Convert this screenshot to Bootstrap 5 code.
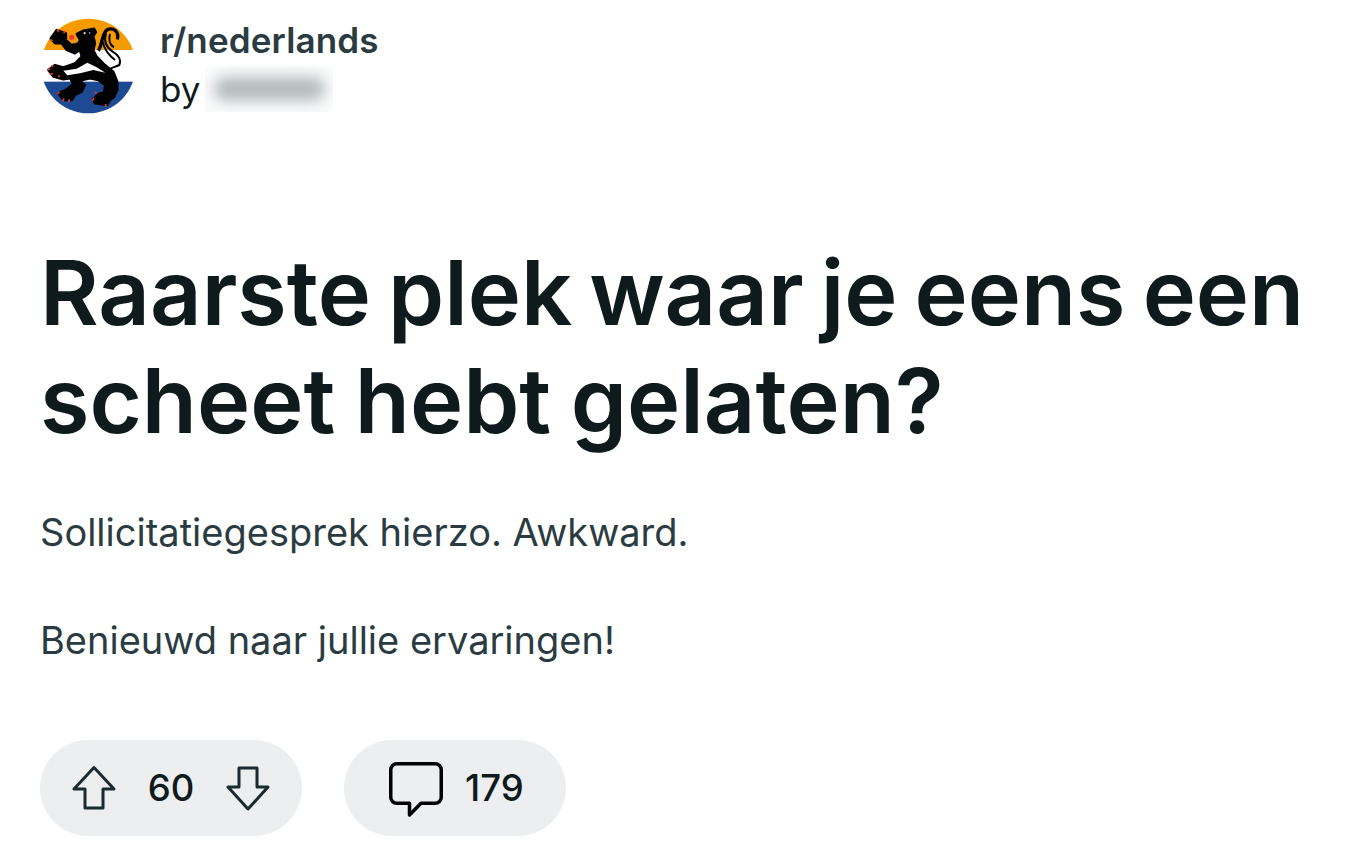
<!DOCTYPE html>
<html lang="nl"><head><meta charset="utf-8"><title>r/nederlands</title>
<link href="https://cdn.jsdelivr.net/npm/bootstrap@5.3.0/dist/css/bootstrap.min.css" rel="stylesheet">
<style>
body{font-family:Inter,"Liberation Sans",sans-serif;background:#fff;overflow:hidden}
.post-wrap{padding:18px 40px 0 40px}
.avatar-icon{width:96px;height:96px;margin-left:-1px;margin-right:25px;flex:none}
.sub-name{font-size:35px;line-height:46px;font-weight:600;color:#2a3c42;margin-top:-1px;letter-spacing:.15px}
.by-line{font-size:35px;line-height:46px;color:#0f1a1c;gap:5px;margin-top:3px}
.blur-box{width:128px;height:46px;background:#fafbfb;position:relative;overflow:hidden}
.blur-box::after{content:"";position:absolute;left:9px;right:8px;top:11px;height:24px;border-radius:12px;background:#b4bbbd;filter:blur(7px)}
.post-title{font-size:90px;line-height:108px;font-weight:600;color:#0f1a1c;word-spacing:-5.600px;margin:125px 0 0 0}
.title-tail{word-spacing:-3px}
.post-body{font-size:38px;line-height:54px;color:#2a3c42;margin:50px 0 0 0}
.action-row{gap:42px;margin-top:73px}
.pill-box{height:96px;border-radius:48px;background:#eceef0;font-size:36.500px;font-weight:500;color:#0f1a1c}
.vote-pill{width:262px;padding-left:30px;padding-right:30px}
.talk-pill{width:222px;padding-left:44px;gap:21px}
.vote-count{flex:1;text-align:center}
</style></head><body>
<div class="post-wrap">
 <div class="d-flex">
  <svg class="avatar-icon" viewBox="27 24 288 288"><defs><clipPath id="disc"><circle cx="175" cy="168" r="142"/></clipPath></defs>
   <g clip-path="url(#disc)"><rect x="27" y="24" width="288" height="288" fill="#fff"/><rect x="27" y="24" width="288" height="96" fill="#f59b00"/><rect x="27" y="215" width="288" height="97" fill="#1e4a94"/></g>
   <path fill="#000" stroke="#000" stroke-width="7" stroke-linejoin="round" d="M140 72L160 62 192 56 198 66 190 78 195 100 190 120 200 140 225 165 250 185 262 215 262 240 252 262 240 270 232 285 195 280 188 268 205 252 222 248 225 225 205 210 180 205 150 212 165 225 155 245 135 255 125 270 100 270 85 250 110 238 130 222 120 205 100 208 70 200 55 180 75 165 100 172 135 160 155 140 150 120 135 130 110 120 95 100 75 100 62 85 80 60 108 70 108 90 125 105 145 100 150 90Z"/>
   <path fill="#fff" d="M100 182L140 176 172 158 200 172 226 188 190 180 150 190 112 196Z"/>
   <path fill="none" stroke="#000" stroke-width="10" d="M205 122C215 110 215 75 230 60 250 50 268 65 262 88"/>
   <path fill="none" stroke="#000" stroke-width="6" d="M228 70C222 90 225 110 248 125 265 135 275 150 268 165 255 172 245 172 238 178M240 72C235 90 240 105 252 112M218 95C222 115 235 135 255 150"/>
   <circle cx="125" cy="82" r="8" fill="#e8402a"/><path stroke="#f08a5a" stroke-width="4" fill="none" d="M125 90L136 100"/>
   <path stroke="#e8402a" stroke-width="5" fill="none" d="M60 92L68 90M82 58L86 66M104 62L102 70M52 178L60 178M64 166L70 170M60 194L68 190M86 202L88 196M82 252L88 246M98 274L102 266M116 276L118 268M186 272L192 264M194 246L200 250M228 290L226 282"/>
   <path fill="#fff" d="M160 68l6-2 1 5-5 2zM176 68l5-1-1 5z"/>
  </svg>
  <div>
   <div class="sub-name">r/nederlands</div>
   <div class="by-line d-flex"><span>by</span><span class="blur-box"></span></div>
  </div>
 </div>
 <h1 class="post-title">Raarste plek waar je eens een<br><span class="title-tail">scheet hebt gelaten?</span></h1>
 <p class="post-body">Sollicitatiegesprek hierzo. Awkward.<br><br>Benieuwd naar jullie ervaringen!</p>
 <div class="action-row d-flex">
  <div class="pill-box vote-pill d-flex align-items-center">
   <svg width="48" height="48" viewBox="0 0 48 48" fill="none" stroke="#1a2a2e" stroke-width="3" stroke-linejoin="round"><path d="M24 3.500 L44 25 H33 V44 H15 V25 H4 Z"/></svg>
   <span class="vote-count">60</span>
   <svg width="48" height="48" viewBox="0 0 48 48" fill="none" stroke="#1a2a2e" stroke-width="3" stroke-linejoin="round"><path d="M24 45 L4 23 H15 V4 H33 V23 H44 Z"/></svg>
  </div>
  <div class="pill-box talk-pill d-flex align-items-center">
   <svg width="56" height="60" viewBox="0 0 56 60" fill="none" stroke="#000" stroke-width="3.500" stroke-linejoin="round"><path d="M8.750 5.750H47.250a6 6 0 0 1 6 6V39.250a6 6 0 0 1-6 6H33L21.500 57V45.250H8.750a6 6 0 0 1-6-6V11.750a6 6 0 0 1 6-6Z"/></svg>
   <span>179</span>
  </div>
 </div>
</div>
<script src="https://cdn.jsdelivr.net/npm/bootstrap@5.3.0/dist/js/bootstrap.bundle.min.js"></script>
</body></html>
